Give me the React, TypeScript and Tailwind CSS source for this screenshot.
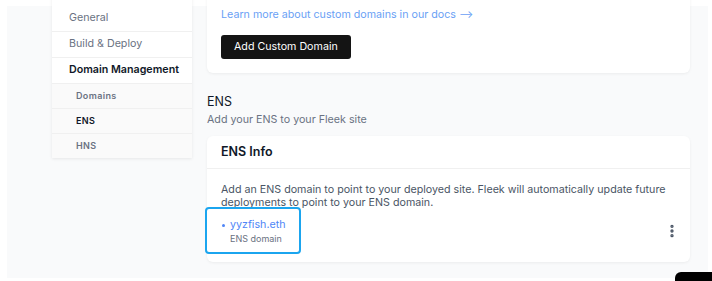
import { MoreVertical } from 'lucide-react'

const FONT = { fontFamily: 'Inter, "Liberation Sans", sans-serif' }

type NavItem = { label: string; sub?: boolean; active?: boolean }

const NAV: NavItem[] = [
  { label: 'General' },
  { label: 'Build & Deploy' },
  { label: 'Domain Management', active: true },
  { label: 'Domains', sub: true },
  { label: 'ENS', sub: true, active: true },
  { label: 'HNS', sub: true },
]

function Sidebar() {
  return (
    <div className="-mt-[5px] w-[140px] shrink-0 bg-white shadow-[0_1px_3px_rgba(0,0,0,0.08)]">
      {NAV.map((item, i) => (
        <div
          key={item.label}
          className={`flex items-center border-[#f0f0f0] ${i > 0 ? 'border-t' : ''} ${
            i === 0 ? 'h-[36px] pt-[10px]' : item.sub ? 'h-[25px]' : 'h-[26px]'
          } ${
            item.sub
              ? 'bg-[#fafafa] pl-[24px] text-[9px] font-semibold tracking-[0.04em]'
              : 'pl-[17px] text-[10.7px]'
          } ${
            item.active
              ? item.sub
                ? 'text-gray-900'
                : 'font-semibold text-gray-900'
              : 'text-gray-500'
          }`}
        >
          {item.label}
        </div>
      ))}
    </div>
  )
}

function EnsInfoCard() {
  return (
    <div className="rounded-md bg-white shadow-[0_1px_3px_rgba(0,0,0,0.06)]">
      <div className="flex h-[33px] items-center border-b border-[#f0f0f0] px-[14px] text-[12.5px] font-semibold text-gray-900">
        ENS Info
      </div>
      <div className="px-[14px] pt-[14px] pb-[8px]">
        <p className="text-[10.7px] leading-[13px] text-gray-600">
          Add an ENS domain to point to your deployed site. Fleek will automatically update future
          deployments to point to your ENS domain.
        </p>
        <div className="-mt-[2px] flex items-center justify-between">
          <div className="-ml-[16px] w-[96px] rounded-[4px] border-2 border-[#1ba5ef] pb-[7px] pl-[15px] pt-[9px]">
            <div className="flex items-center gap-[5px] text-[10.7px] leading-[14px] text-[#4f86f7]">
              <span className="h-[3px] w-[3px] rounded-full bg-[#4f86f7]" />
              yyzfish.eth
            </div>
            <div className="pl-[8px] text-[9px] leading-[13px] text-gray-500">ENS domain</div>
          </div>
          <MoreVertical className="mr-[-4px] h-[16px] w-[16px] text-gray-600" strokeWidth={3} />
        </div>
      </div>
    </div>
  )
}

export default function App() {
  return (
    <div className="relative h-[281px] w-[712px] overflow-hidden bg-white" style={FONT}>
      <div className="absolute left-[7px] top-[6px] h-[272px] w-[701px] bg-[#f9fafb]" />
      <div className="relative flex items-start gap-[15px] pl-[52px]">
        <Sidebar />
        <div className="w-[483px]">
          <div className="-mt-[20px] rounded-md bg-white px-[14px] pb-[14px] pt-[27px] shadow-[0_1px_3px_rgba(0,0,0,0.06)]">
            <a className="block text-[10.7px] leading-[16px] text-[#6a9ff5]">
              Learn more about custom domains in our docs ⟶
            </a>
            <button className="mt-[12px] h-[24px] rounded-[3px] bg-[#141414] px-[13px] text-[10.7px] text-white">
              Add Custom Domain
            </button>
          </div>
          <div className="mt-[20px] text-[12.5px] leading-[18px] text-gray-900">ENS</div>
          <div className="text-[10.7px] leading-[18px] text-gray-500">Add your ENS to your Fleek site</div>
          <div className="mt-[7px]">
            <EnsInfoCard />
          </div>
        </div>
      </div>
      <div className="absolute bottom-0 right-0 h-[9px] w-[37px] rounded-tl-[6px] bg-black" />
    </div>
  )
}
